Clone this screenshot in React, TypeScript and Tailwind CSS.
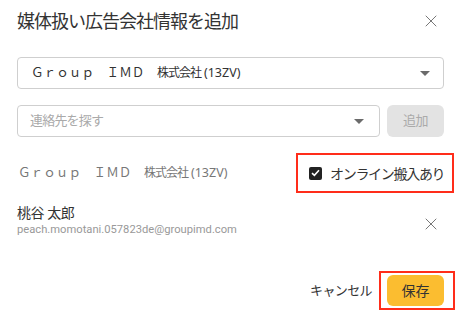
import { X } from "lucide-react";

const jp = { fontFamily: '"Noto Sans", "Noto Sans CJK JP", sans-serif' };

function Caret() {
  return (
    <svg width="10" height="5" viewBox="0 0 10 5" className="shrink-0">
      <path d="M0 0 L10 0 L5 5 Z" fill="#6b6b6b" />
    </svg>
  );
}

function CompanyName({ className }: { className: string }) {
  return (
    <span className={`flex items-center whitespace-nowrap ${className}`}>
      <span className="text-[12.6px]">Ｇｒｏｕｐ　ＩＭＤ　</span>
      <span className="text-[12px] tracking-[-1px]">株式会社</span>
      <span className="text-[12.5px] ml-[3px]">(13ZV)</span>
    </span>
  );
}

export default function App() {
  return (
    <div className="w-[461px] h-[318px] bg-white px-[17px] overflow-hidden" style={jp}>
      {/* Header */}
      <div className="h-[42px] flex items-center justify-between">
        <h2 className="text-[18px] tracking-[-1px] text-[#333] pt-[1px]">媒体扱い広告会社情報を追加</h2>
        <X className="w-[20px] h-[20px] text-[#777] mr-[3px]" strokeWidth={1.2} />
      </div>

      {/* Company select */}
      <div className="mt-[15px] h-[32px] border border-[#cfcfcf] rounded-[4px] flex items-center justify-between pl-[13px] pr-[13px]">
        <CompanyName className="text-[#333]" />
        <Caret />
      </div>

      {/* Contact search */}
      <div className="mt-[16px] flex gap-[7px]">
        <div className="flex-1 h-[32px] border border-[#cfcfcf] rounded-[4px] flex items-center justify-between pl-[12px] pr-[15px]">
          <span className="text-[13px] tracking-[-0.8px] text-[#aaa]">連絡先を探す</span>
          <Caret />
        </div>
        <button className="w-[57px] h-[32px] rounded-[6px] bg-[#e3e3e3] text-[13px] text-[#aaa] tracking-[-0.5px]">
          追加
        </button>
      </div>

      {/* Selected company */}
      <div className="mt-[16px] h-[40px] flex items-center justify-between">
        <CompanyName className="text-[#777] pl-[1px]" />
        <label className="relative h-[40px] w-[158px] -mr-[10px] flex items-center pl-[13px] gap-[8px]">
          <span className="w-[13px] h-[13px] rounded-[2px] bg-[#222] flex items-center justify-center">
            <svg width="9" height="8" viewBox="0 0 9 8">
              <path d="M1 4.2 L3.4 6.4 L8 1.3" stroke="#fff" strokeWidth="1.6" fill="none" />
            </svg>
          </span>
          <span className="text-[14px] tracking-[-1.3px] text-[#333]">オンライン搬入あり</span>
          <span className="absolute inset-0 border-2 border-[#ff2d1a]" />
        </label>
      </div>

      {/* Contact */}
      <div className="mt-[11px] flex items-center justify-between">
        <div className="flex flex-col">
          <span className="text-[14px] leading-[18px] text-[#333] tracking-[-0.5px]">桃谷 太郎</span>
          <span className="text-[11.2px] leading-[16px] text-[#999]" style={{ fontFamily: 'Roboto, sans-serif' }}>
            peach.momotani.057823de@groupimd.com
          </span>
        </div>
        <X className="w-[20px] h-[20px] text-[#777] mr-[3px] mt-[6px]" strokeWidth={1.2} />
      </div>

      {/* Footer */}
      <div className="mt-[33px] flex items-center justify-end">
        <button className="text-[13px] tracking-[-0.6px] text-[#333] mr-[7px]">キャンセル</button>
        <div className="relative -mr-[11px] pl-[8px] pr-[11px] py-[4px]">
          <button className="w-[57px] h-[31px] rounded-[6px] bg-[#fbbd30] text-[14px] text-[#333]">保存</button>
          <span className="absolute inset-0 border-2 border-[#ff2d1a]" />
        </div>
      </div>
    </div>
  );
}
